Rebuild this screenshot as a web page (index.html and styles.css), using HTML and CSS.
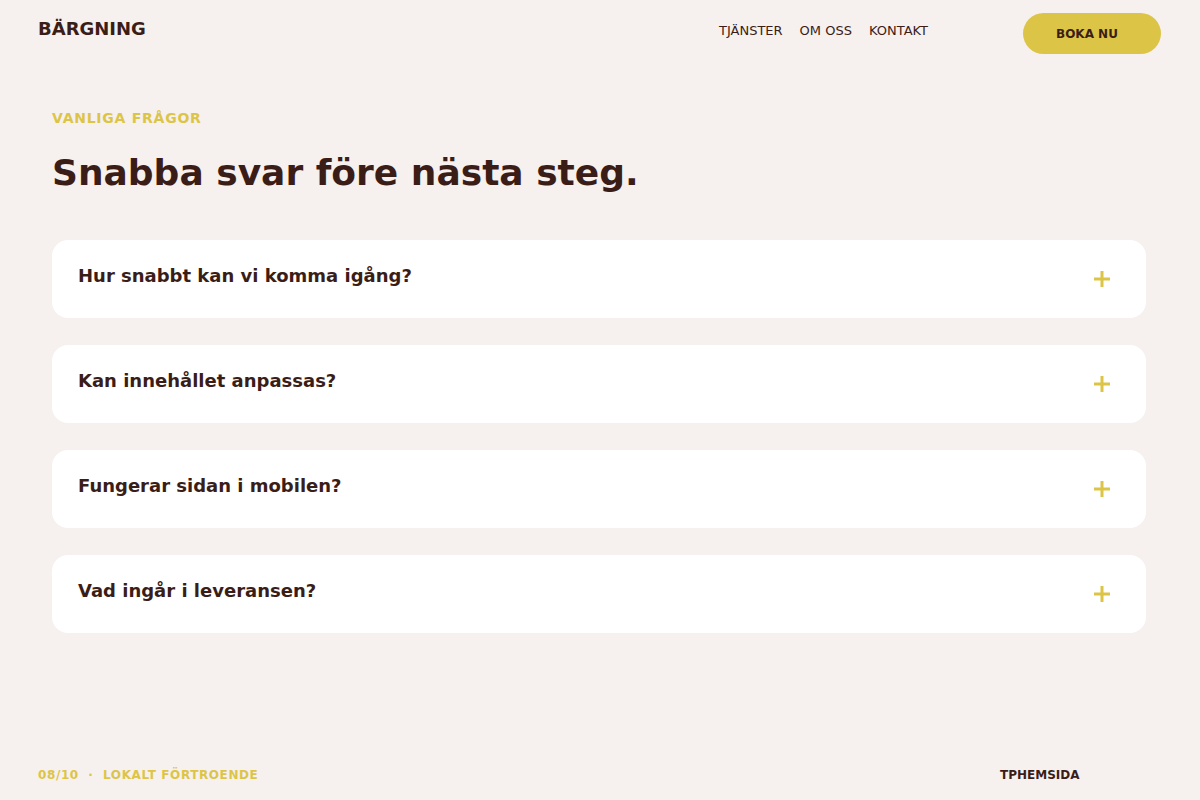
FILE: index.html
```html
<!DOCTYPE html>
<html lang="sv">
<head>
<meta charset="utf-8">
<title>Bärgning – Vanliga frågor</title>
<link rel="stylesheet" href="styles.css">
</head>
<body>
  <header class="site-header">
    <div class="logo">BÄRGNING</div>
    <nav class="main-nav">
      <a href="#">TJÄNSTER</a>
      <a href="#">OM OSS</a>
      <a href="#">KONTAKT</a>
    </nav>
    <a class="cta" href="#">BOKA NU</a>
  </header>

  <main class="faq">
    <p class="eyebrow">VANLIGA FRÅGOR</p>
    <h1 class="faq-title">Snabba svar före nästa steg.</h1>

    <div class="faq-list">
      <div class="faq-item">
        <span class="question">Hur snabbt kan vi komma igång?</span>
        <svg class="plus" viewBox="0 0 16 16" width="16" height="16"><path d="M8 0v16M0 8h16"/></svg>
      </div>
      <div class="faq-item">
        <span class="question">Kan innehållet anpassas?</span>
        <svg class="plus" viewBox="0 0 16 16" width="16" height="16"><path d="M8 0v16M0 8h16"/></svg>
      </div>
      <div class="faq-item">
        <span class="question">Fungerar sidan i mobilen?</span>
        <svg class="plus" viewBox="0 0 16 16" width="16" height="16"><path d="M8 0v16M0 8h16"/></svg>
      </div>
      <div class="faq-item">
        <span class="question">Vad ingår i leveransen?</span>
        <svg class="plus" viewBox="0 0 16 16" width="16" height="16"><path d="M8 0v16M0 8h16"/></svg>
      </div>
    </div>
  </main>

  <footer class="site-footer">
    <span class="footer-note">08/10 &nbsp;·&nbsp; LOKALT FÖRTROENDE</span>
    <span class="footer-brand">TPHEMSIDA</span>
  </footer>
</body>
</html>
```

FILE: styles.css
```css
* { box-sizing: border-box; }

html, body {
  margin: 0;
  height: 100%;
}

body {
  background: #f6f0ef;
  color: #3b1d17;
  font-family: "DejaVu Sans", "Noto Sans", sans-serif;
  display: flex;
  flex-direction: column;
  min-height: 800px;
}

/* top bar */
.site-header {
  display: flex;
  align-items: center;
  padding: 13px 39px 0 38px;
  height: 54px;
}

.logo {
  font-size: 18px;
  font-weight: 700;
  margin-top: -10px;
}

.main-nav {
  margin-left: auto;
  display: flex;
  gap: 17px;
  margin-top: -6px;
}

.main-nav a {
  color: #3b1d17;
  text-decoration: none;
  font-size: 13px;
}

.cta {
  margin-left: 95px;
  width: 138px;
  height: 41px;
  border-radius: 21px;
  background: #dcc546;
  color: #3b1d17;
  text-decoration: none;
  font-size: 12px;
  font-weight: 700;
  display: flex;
  align-items: center;
  padding: 1px 0 0 33px;
}

/* FAQ section */
.faq {
  width: 1094px;
  margin: 0 0 0 52px;
  padding-top: 56px;
  flex: 1;
}

.eyebrow {
  margin: 0;
  color: #dcc546;
  font-size: 14px;
  font-weight: 700;
  letter-spacing: 0.75px;
}

.faq-title {
  margin: 25px 0 0;
  font-size: 36px;
  font-weight: 700;
  line-height: 1.2;
}

.faq-list {
  margin-top: 46px;
  display: flex;
  flex-direction: column;
  gap: 27px;
}

.faq-item {
  background: #fff;
  border-radius: 16px;
  height: 78px;
  padding: 0 36px 0 26px;
  display: flex;
  align-items: center;
  justify-content: space-between;
}

.question {
  font-size: 18px;
  font-weight: 700;
  margin-top: -8px;
}

.plus {
  stroke: #dcc546;
  stroke-width: 3;
  fill: none;
}

/* bottom line */
.site-footer {
  display: flex;
  align-items: center;
  justify-content: space-between;
  padding: 0 38px 18px;
  font-size: 12px;
  font-weight: 700;
}

.footer-note {
  color: #dcc546;
  letter-spacing: 0.6px;
}

.footer-brand {
  width: 162px;
}
```
